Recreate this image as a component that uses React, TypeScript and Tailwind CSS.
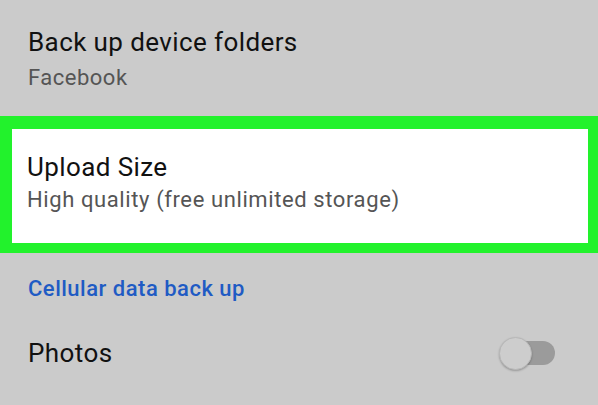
export default function App() {
  return (
    <div
      className="w-[598px] h-[405px] overflow-hidden bg-[#cbcbcb]"
      style={{ fontFamily: "Roboto, 'Liberation Sans', sans-serif" }}
    >
      <div className="pt-[27px] pl-[28px]">
        <div className="text-[26px] leading-[30px] tracking-[0.4px] text-[#111]">Back up device folders</div>
        <div className="mt-[8px] text-[22px] leading-[26px] tracking-[0.5px] text-[#555]">Facebook</div>
      </div>
      <div className="mt-[25px] bg-white border-[#22f22c] border-t-[13px] border-l-[12px] border-r-[10px] border-b-[10px]">
        <div className="h-[114px] pt-[23px] pl-[15px]">
          <div className="text-[26px] leading-[30px] tracking-[0.4px] text-[#111]">Upload Size</div>
          <div className="mt-[5px] text-[22px] leading-[26px] tracking-[0.6px] text-[#555]">High quality (free unlimited storage)</div>
        </div>
      </div>
      <div className="pl-[28px] pt-[23px]">
        <div className="text-[22px] leading-[26px] tracking-[0.5px] font-medium text-[#1f5bc4]">Cellular data back up</div>
        <div className="mt-[34px] flex items-center justify-between pr-[43px]">
          <div className="text-[26px] leading-[30px] tracking-[0.4px] text-[#111]">Photos</div>
          <div className="relative w-[56px] h-[34px] flex items-center">
            <div className="absolute right-0 w-[48px] h-[24px] rounded-full bg-[#9b9b9b]" />
            <div className="absolute left-0 w-[33px] h-[33px] rounded-full bg-[#cdcdcd] border border-[#b8b8b8] shadow-[0_1px_2px_rgba(0,0,0,0.25)]" />
          </div>
        </div>
      </div>
    </div>
  );
}
